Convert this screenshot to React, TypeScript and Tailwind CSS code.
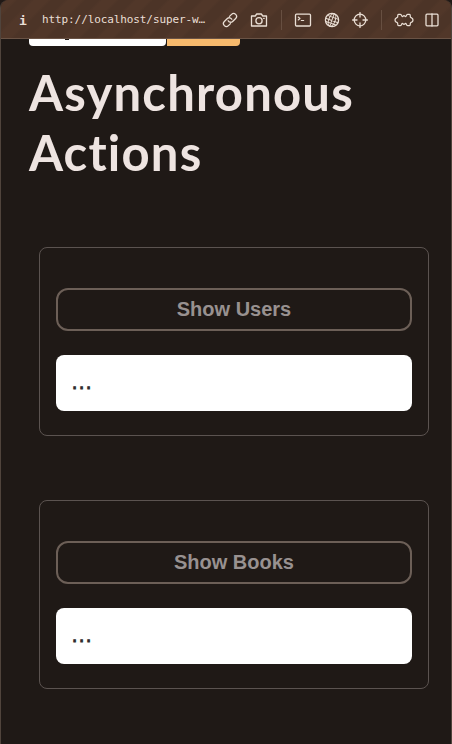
import type { ReactNode } from "react";

function Icon({ w, h, children }: { w: number; h: number; children: ReactNode }) {
  return (
    <svg
      width={w}
      height={h}
      viewBox={`0 0 ${w} ${h}`}
      fill="none"
      stroke="#eadfd5"
      strokeWidth="1.3"
      strokeLinecap="round"
      strokeLinejoin="round"
      className="shrink-0"
    >
      {children}
    </svg>
  );
}

function LinkIcon() {
  return (
    <Icon w={16} h={16}>
      <g transform="rotate(-45 8 8)">
        <path d="M9.800 8.800A2.900 2.900 0 0 0 7.500 5.100H2.900a2.900 2.900 0 0 0 0 5.800h2.900" />
        <path d="M6.200 7.200A2.900 2.900 0 0 0 8.500 10.900h4.600a2.900 2.900 0 0 0 0-5.800h-2.900" />
      </g>
    </Icon>
  );
}

function CameraIcon() {
  return (
    <Icon w={18} h={16}>
      <path d="M1.500 4h3.700l1.500-2h4.600l1.500 2h3.700v10h-15z" />
      <circle cx="9" cy="8.700" r="3.100" />
      <path d="M13.600 6.300h.6" />
    </Icon>
  );
}

function TerminalIcon() {
  return (
    <Icon w={18} h={16}>
      <rect x="1.500" y="2.200" width="15" height="11.800" rx="1" />
      <path d="M4.200 5l1.800 1.500-1.800 1.500M7.300 8.500h2.400" strokeWidth="1.100" />
    </Icon>
  );
}

function GlobeIcon() {
  return (
    <Icon w={16} h={16}>
      <circle cx="8" cy="8" r="6.600" />
      <g transform="rotate(20 8 8)" strokeWidth="1">
        <ellipse cx="8" cy="8" rx="3.200" ry="6.500" />
        <path d="M8 1.500v13M2.200 5.200h11.600M1.500 8.500h13M2.800 11.500h10.400" />
      </g>
    </Icon>
  );
}

function TargetIcon() {
  return (
    <Icon w={16} h={16}>
      <circle cx="8" cy="8" r="5.800" />
      <path d="M8 .6v4.400M8 11v4.400M.6 8H5M11 8h4.400" />
    </Icon>
  );
}

function PuzzleIcon() {
  return (
    <Icon w={20} h={14}>
      <path d="M4.500 1.400h1.900c1.500 0 1 2.200 2 2.200.8 0 .7-1 1.600-1s.8 1 1.600 1c1 0 .5-2.200 2-2.200h1.900c1.300 0 .4 2.400 1.100 2.900.6.400 2.400.3 2.400 2.700s-1.800 2.300-2.400 2.700c-.7.500.2 2.900-1.100 2.900h-1.900c-1.500 0-1-2.200-2-2.200-.8 0-.7 1-1.600 1s-.8-1-1.600-1c-1 0-.5 2.200-2 2.200H4.500c-1.300 0-.4-2.400-1.100-2.900C2.800 9.300 1 9.400 1 7s1.800-2.300 2.400-2.700C4.100 3.800 3.200 1.400 4.500 1.400z" />
    </Icon>
  );
}

function SplitIcon() {
  return (
    <Icon w={14} h={14}>
      <rect x="1" y="1.200" width="12" height="11.600" rx="1" />
      <path d="M7 1v12" />
    </Icon>
  );
}

function Toolbar() {
  return (
    <header className="flex h-[39px] shrink-0 items-center rounded-t-lg border-b border-[#6a5345] bg-[#4f3628] bg-[repeating-linear-gradient(135deg,#513729_0px,#513729_9px,#4c3427_12px,#4c3427_21px,#513729_24px)] pt-px pl-[18px] text-[#eadfd5]">
      <span className="w-[23px] pt-0.5 font-['DejaVu_Sans_Mono',monospace] text-[13px] font-bold">i</span>
      <span className="w-[180px] pt-0.5 font-['DejaVu_Sans_Mono',monospace] text-[11px] tracking-[-0.1px] whitespace-nowrap">
        http://localhost/super-w…
      </span>
      <LinkIcon />
      <div className="w-[12px]" />
      <CameraIcon />
      <div className="ml-[13px] h-5 w-px bg-[#674f41]" />
      <div className="w-[12px]" />
      <TerminalIcon />
      <div className="w-[12px]" />
      <GlobeIcon />
      <div className="w-[12px]" />
      <TargetIcon />
      <div className="ml-[13px] h-5 w-px bg-[#674f41]" />
      <div className="w-[12px]" />
      <PuzzleIcon />
      <div className="w-[11px]" />
      <SplitIcon />
    </header>
  );
}

function Panel({ label }: { label: string }) {
  return (
    <section className="flex h-[189px] flex-col rounded-lg border border-[#5b5350] px-4 pt-10">
      <button className="h-[43px] shrink-0 rounded-xl border-2 border-[#6c5f57] pb-0.5 font-['Liberation_Sans',sans-serif] text-[20px] leading-none font-bold text-[#989190]">
        {label}
      </button>
      <pre className="mt-6 h-14 rounded-lg bg-white px-[15px] pt-[18px] font-['DejaVu_Sans_Mono',monospace] text-[12px] leading-6 font-bold tracking-[-0.2px] text-[#272727] [-webkit-text-stroke:0.8px_#333333]">
        ...
      </pre>
    </section>
  );
}

export default function App() {
  return (
    <div className="h-[744px] w-[452px] overflow-hidden bg-[#211916]">
      <div className="flex h-full flex-col rounded-t-lg border-x border-[#50443c] bg-[#1f1916]">
        <Toolbar />
        <div className="ml-7 flex h-[7px] shrink-0 gap-px">
          <div className="w-[137px] rounded-b-[4px] bg-white pl-9">
            <div className="h-px w-1 bg-[#1f1916]" />
          </div>
          <div className="w-[73px] rounded-br-[4px] bg-[#f7ba6d]" />
        </div>
        <h1 className="mt-4 ml-7 font-[Lato,sans-serif] text-[49px] leading-[60px] font-bold tracking-[1.2px] text-[#eee4e1]">
          Asynchronous
          <br />
          Actions
        </h1>
        <main className="mt-[65px] mr-[22px] ml-[38px] flex flex-col gap-16">
          <Panel label="Show Users" />
          <Panel label="Show Books" />
        </main>
      </div>
    </div>
  );
}
